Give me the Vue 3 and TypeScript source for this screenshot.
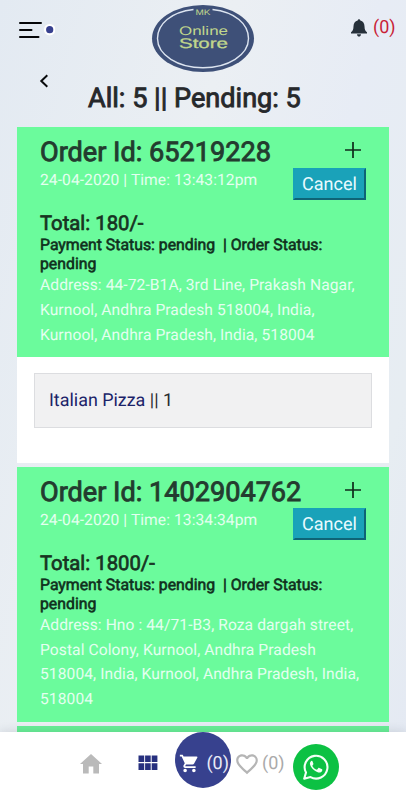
<script setup lang="ts">
interface Order {
  id: string
  date: string
  total: string
  address: string
  items: { name: string; qty: number }[]
  open: boolean
}

const orders: Order[] = [
  {
    id: '65219228',
    date: '24-04-2020 | Time: 13:43:12pm',
    total: '180/-',
    address:
      'Address: 44-72-B1A, 3rd Line, Prakash Nagar,\nKurnool, Andhra Pradesh 518004, India,\nKurnool, Andhra Pradesh, India, 518004',
    items: [{ name: 'Italian Pizza', qty: 1 }],
    open: true,
  },
  {
    id: '1402904762',
    date: '24-04-2020 | Time: 13:34:34pm',
    total: '1800/-',
    address:
      'Address: Hno : 44/71-B3, Roza dargah street,\nPostal Colony, Kurnool, Andhra Pradesh\n518004, India, Kurnool, Andhra Pradesh, India,\n518004',
    items: [],
    open: false,
  },
]
</script>

<template>
  <div class="screen">
    <header class="top">
      <svg class="menu" width="36" height="20" viewBox="0 0 36 20">
        <path d="M1 3H22M1 10H12.5M1 17H19.5" stroke="#050608" stroke-width="2" stroke-linecap="round" />
        <circle cx="30.7" cy="9.7" r="5.8" fill="#fff" />
        <circle cx="30.7" cy="9.7" r="3.6" fill="#37408f" />
      </svg>
      <svg class="logo" width="104" height="70" viewBox="0 0 104 70">
        <ellipse cx="52" cy="34.5" rx="51" ry="33.5" fill="#3e5078" />
        <path d="M42.5 5.5C20 8 6.500 20 6.500 34.500C6.500 51 27 63.800 52 63.800S97.500 51 97.500 34.500C97.500 20 84 8 61.500 5.500" fill="none" stroke="#dce4f0" stroke-width="1.4" />
        <text x="52" y="11" class="logo-small" textLength="15" lengthAdjust="spacingAndGlyphs">MK</text>
        <text x="52.500" y="31.300" class="logo-word" textLength="49" lengthAdjust="spacingAndGlyphs">Online</text>
        <text x="52.500" y="43.700" class="logo-word strong" textLength="49" lengthAdjust="spacingAndGlyphs">Store</text>
      </svg>
      <div class="alerts">
        <svg width="18" height="20" viewBox="0 0 18 20">
          <path d="M9 1.200C8.200 1.200 7.800 1.800 7.700 2.500C4.900 3.200 3.600 5.500 3.500 8.200C3.400 11.500 2.800 12.800 1 14.200V15.500H17V14.200C15.200 12.800 14.600 11.500 14.500 8.200C14.400 5.500 13.100 3.200 10.300 2.500C10.200 1.800 9.800 1.200 9 1.200ZM7 16.200C7.100 17.700 8 18.600 9 18.600S10.900 17.700 11 16.200Z" fill="#26303a" />
        </svg>
        <span>(0)</span>
      </div>
    </header>
    <div class="title-row">
      <svg class="back" width="10" height="16" viewBox="0 0 10 16">
        <path d="M8.300 2.300L2.300 8L8.300 13.700" fill="none" stroke="#080a0c" stroke-width="2" />
      </svg>
      <h1>All: 5 || Pending: 5</h1>
    </div>

    <main class="orders">
      <article v-for="order in orders" :key="order.id" class="order">
        <section class="summary">
          <div class="row">
            <h2>Order Id: {{ order.id }}</h2>
            <svg class="plus" width="16" height="16" viewBox="0 0 16 16">
              <path d="M0 8H16M8 0V16" stroke="#102a1b" stroke-width="1.700" />
            </svg>
          </div>
          <div class="row meta">
            <p class="date">{{ order.date }}</p>
            <button type="button">Cancel</button>
          </div>
          <h3>Total: {{ order.total }}</h3>
          <p class="status">Payment Status: pending&nbsp; | Order Status:<br />pending</p>
          <p class="address">{{ order.address }}</p>
        </section>
        <section v-if="order.open" class="details">
          <div v-for="item in order.items" :key="item.name" class="item">
            <a>{{ item.name }}</a> || {{ item.qty }}
          </div>
        </section>
      </article>
      <div class="next"></div>
    </main>

    <nav class="bar">
      <svg class="home" width="24" height="22" viewBox="0 0 24 22">
        <path d="M12 1L1 11H4V20.500H9.700V13.500H14.300V20.500H20V11H23Z" fill="#bababa" />
      </svg>
      <svg class="grid" width="20" height="16" viewBox="0 0 20 16">
        <path d="M.5 .5H6.200V6.900H.5ZM7.100 .5H12.700V6.900H7.100ZM13.700 .5H19.400V6.900H13.700ZM.5 8.300H6.200V15H.5ZM7.100 8.300H12.700V15H7.100ZM13.700 8.300H19.400V15H13.700Z" fill="#27307f" />
      </svg>
      <div class="cart">
        <svg width="21" height="21" viewBox="0 0 24 24">
          <path d="M7 18c-1.100 0-1.990.9-1.990 2S5.900 22 7 22s2-.9 2-2-.9-2-2-2zM1 2v2h2l3.600 7.590-1.350 2.450c-.16.280-.25.610-.25.960 0 1.100.9 2 2 2h12v-2H7.420c-.14 0-.25-.11-.25-.25l.03-.12.9-1.630h7.450c.75 0 1.410-.41 1.750-1.030l3.580-6.490A1 1 0 0 0 20 4H5.210l-.94-2H1zm16 16c-1.100 0-1.990.9-1.990 2s.89 2 1.990 2 2-.9 2-2-.9-2-2-2z" fill="#fff" />
        </svg>
        <span>(0)</span>
      </div>
      <div class="likes">
        <svg width="26" height="26" viewBox="0 0 24 24">
          <path d="M16.500 3c-1.740 0-3.410.81-4.500 2.090C10.910 3.810 9.240 3 7.500 3 4.420 3 2 5.420 2 8.500c0 3.780 3.400 6.860 8.550 11.540L12 21.350l1.450-1.320C18.600 15.360 22 12.280 22 8.500 22 5.420 19.580 3 16.500 3zm-4.400 15.550l-.1.100-.1-.1C7.140 14.240 4 11.390 4 8.500 4 6.500 5.500 5 7.500 5c1.540 0 3.040.99 3.570 2.360h1.870C13.460 5.990 14.960 5 16.500 5c2 0 3.500 1.500 3.500 3.500 0 2.890-3.140 5.740-7.900 10.050z" fill="#b5b5b5" />
        </svg>
        <span>(0)</span>
      </div>
      <div class="chat">
        <svg width="28" height="28" viewBox="0 0 28 28">
          <path d="M2.200 25.800L4 19.500A11.400 11.400 0 1 1 8.500 24.100Z" fill="none" stroke="#f4fff6" stroke-width="2.100" stroke-linejoin="round" />
          <path d="M10.200 7.900C9.600 7.700 8.900 8.100 8.400 8.900C7.500 10.300 7.900 12 9 13.700C10.800 16.400 13.300 18.600 16.300 19.400C18.100 19.900 20.100 18.700 20.300 17.200C20.400 16.500 20.200 16.300 19.600 16L17.300 14.900C16.800 14.700 16.500 14.800 16.200 15.200L15.200 16.400C14.900 16.700 14.600 16.700 14.200 16.500C12.600 15.800 11.300 14.600 10.500 13.200C10.300 12.800 10.400 12.500 10.700 12.200C11.400 11.400 11.600 11.100 11.300 10.500L10.600 8.500C10.500 8.200 10.400 8 10.200 7.900Z" fill="#f4fff6" />
        </svg>
      </div>
    </nav>
  </div>
</template>

<style>
body {
  margin: 0;
}
</style>

<style scoped>
.screen {
  width: 406px;
  height: 800px;
  box-sizing: border-box;
  overflow: hidden;
  display: flex;
  flex-direction: column;
  font-family: Roboto, sans-serif;
  text-rendering: geometricPrecision;
  background: linear-gradient(105deg, #e3eaf2 0%, #ebeff3 38%, #e7ecf5 62%, #e7edf2 82%, #e4e9f3 100%);
}
h1,
h2,
h3,
p {
  margin: 0;
  font-weight: 400;
}
.top {
  flex: none;
  height: 74px;
  display: grid;
  grid-template-columns: 151px 104px 1fr;
  align-items: start;
}
.menu {
  margin: 20px 0 0 19px;
}
.logo {
  margin-top: 4px;
}
.logo-small,
.logo-word {
  font-family: 'Liberation Sans', sans-serif;
  fill: #c0d68c;
  text-anchor: middle;
}
.logo-small {
  font-size: 8px;
}
.logo-word {
  font-size: 12.500px;
}
.strong {
  font-size: 14px;
  stroke: #c0d68c;
  stroke-width: 0.3px;
}
.alerts {
  display: flex;
  gap: 5px;
  margin: 18px 0 0 95px;
  font-size: 18px;
  line-height: 20px;
  color: #c91f38;
}
.title-row {
  flex: none;
  height: 53px;
  display: flex;
  align-items: flex-start;
}
.back {
  margin: -1px 0 0 39px;
}
h1 {
  margin: 8px 0 0 39px;
  font-size: 27.100px;
  line-height: 32px;
  color: #26282b;
  -webkit-text-stroke: 0.9px #26282b;
  white-space: nowrap;
}
.orders {
  flex: 1;
  min-height: 0;
  overflow: hidden;
  margin: 0 17px;
  display: flex;
  flex-direction: column;
  gap: 4px;
}
.order {
  flex: none;
}
.summary {
  background: #6bfb9c;
  padding: 9px 23px 9.500px;
}
.row {
  display: flex;
  justify-content: space-between;
  align-items: flex-start;
}
h2 {
  font-size: 27.100px;
  line-height: 32px;
  color: #233c2f;
  -webkit-text-stroke: 0.9px #233c2f;
  white-space: nowrap;
}
.plus {
  margin: 6px 5px 0 0;
}
.meta {
  height: 44px;
}
.date {
  padding-top: 2px;
  font-size: 15.600px;
  line-height: 20px;
  letter-spacing: 0.07px;
  color: #e4fff0;
  white-space: nowrap;
}
button {
  width: 73px;
  height: 32px;
  margin-right: 0;
  padding: 1px 0 0;
  border: 2px solid;
  border-color: #17a2b8 #0e6476 #0e6476 #17a2b8;
  background: #1aa2b9;
  color: #e9fbff;
  font: 18px/28px Roboto, sans-serif;
  text-rendering: geometricPrecision;
}
h3 {
  font-size: 20.300px;
  line-height: 23px;
  color: #173322;
  -webkit-text-stroke: 0.7px #173322;
}
.status {
  font-size: 15.800px;
  line-height: 19px;
  color: #10301d;
  -webkit-text-stroke: 0.6px #10301d;
  white-space: nowrap;
}
.address {
  font-size: 15.600px;
  line-height: 24.800px;
  letter-spacing: 0.08px;
  color: #e4fff0;
  white-space: pre;
}
.details {
  height: 106px;
  box-sizing: border-box;
  padding: 16px 17px 35px;
  background: #fff;
}
.item {
  height: 55px;
  box-sizing: border-box;
  border: 1px solid #dcdde0;
  background: #f1f1f2;
  padding-left: 14px;
  font-size: 17.900px;
  line-height: 53px;
  color: #292b31;
}
.item a {
  color: #1b2369;
}
.next {
  flex: none;
  height: 20px;
  background: #68ef96;
}
.bar {
  position: relative;
  flex: none;
  height: 68px;
  display: flex;
  align-items: flex-start;
  background: #fff;
  box-shadow: 0 0 10px rgba(40, 50, 70, 0.16);
}
.home {
  margin: 21px 0 0 79px;
}
.grid {
  margin: 23px 0 0 35px;
}
.cart {
  width: 56px;
  height: 56px;
  box-sizing: border-box;
  margin-left: 17px;
  padding: 0 2px 0 4px;
  border-radius: 50%;
  display: flex;
  align-items: center;
  justify-content: space-between;
  background: #37418e;
  color: #e9ebf6;
  font-size: 18px;
}
.cart span {
  padding-top: 6px;
}
.likes span {
  padding-top: 2px;
}
.cart svg {
  padding-top: 7px;
}
.likes {
  display: flex;
  gap: 2px;
  margin: 19px 0 0 3px;
  font-size: 18px;
  color: #aaa;
}
.chat {
  width: 46px;
  height: 46px;
  margin: 12px 0 0 8px;
  border-radius: 50%;
  background: #0cc143;
  display: grid;
  place-items: center;
}
</style>
